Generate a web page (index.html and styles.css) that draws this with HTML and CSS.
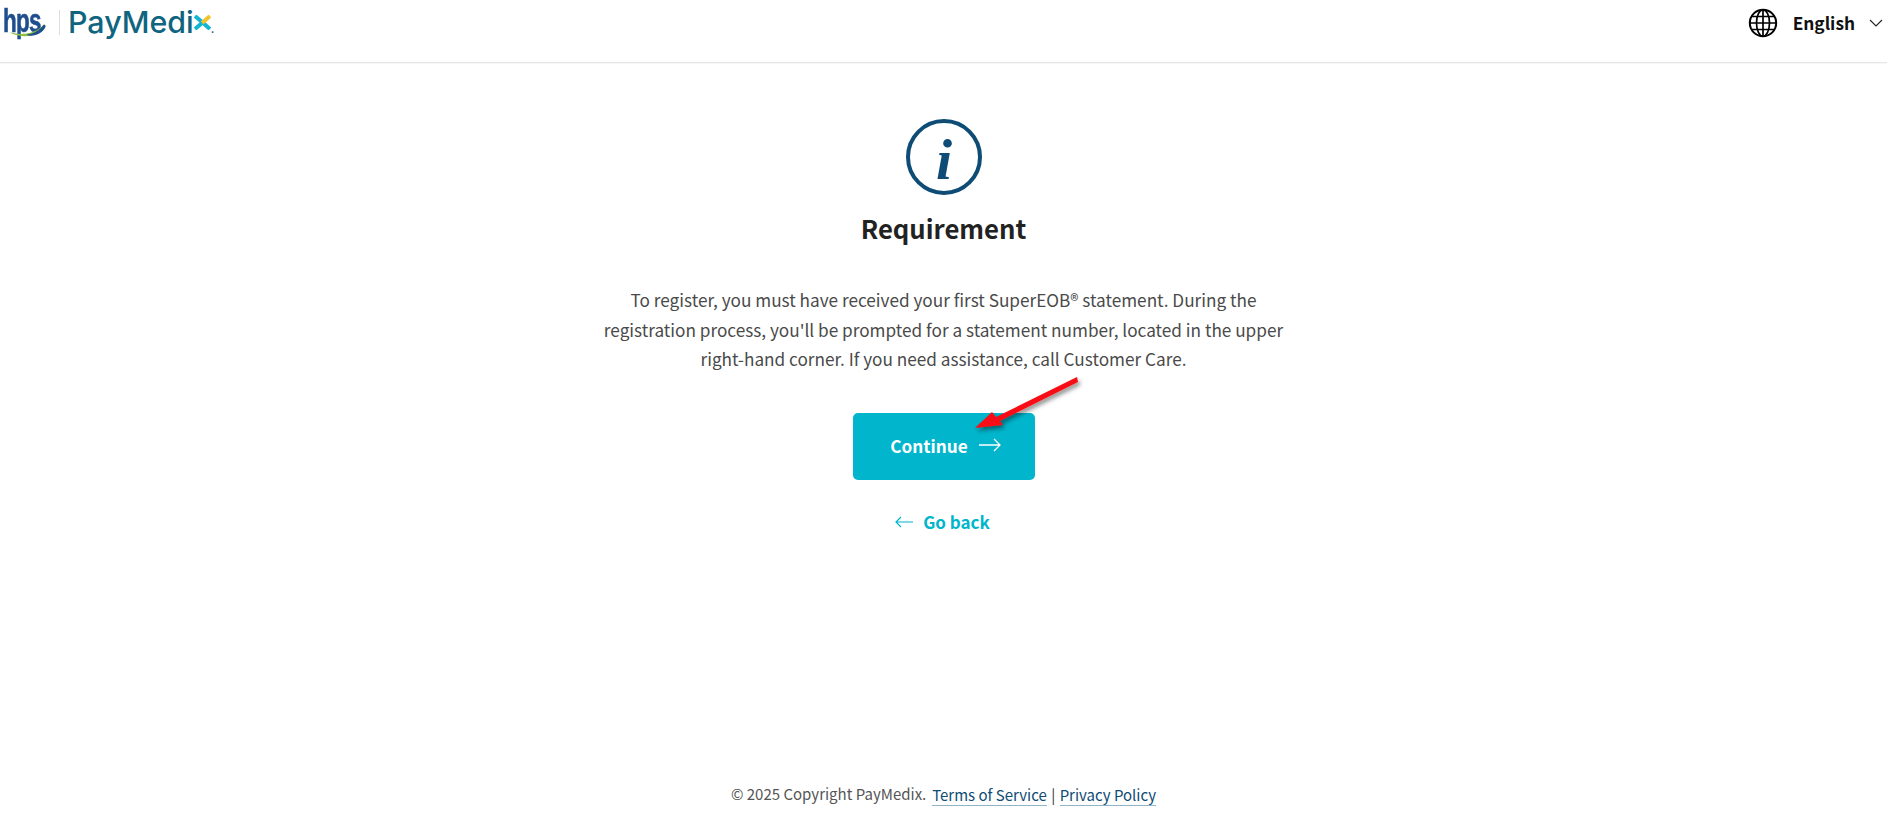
FILE: index.html
```html
<!DOCTYPE html>
<html>
<head>
    <meta charset="utf-8">
    <title>PayMedix - Requirement</title>
    <link rel="stylesheet" href="styles.css">
</head>
<body>
<div class="page">
    <header class="header">
        <div class="logo">
            <span class="logo-hps"><span class="logo-hps-text">hps</span><svg class="logo-swoosh" width="44" height="16" viewBox="0 0 44 16"><path d="M1 9C14 14 32 11 41 1C43 0 44 2 43 4C38 14 14 18 1 9Z" fill="#8fbf3f"/><path d="M22 12C30 11 37 7 41 1C43 0 44 2 43 4C40 10 32 15 22 13Z" fill="#1f4e8f"/></svg></span>
            <span class="logo-divider"></span>
            <span class="logo-pay">PayMedi<span class="logo-x">x<svg class="logo-x-mark" width="17" height="15" viewBox="0 0 17 15"><path d="M1 1L16 14" stroke="#12b5d3" stroke-width="4"/><path d="M16 1L8 8" stroke="#f2c230" stroke-width="4"/><path d="M1 14L8 8" stroke="#12b5d3" stroke-width="4"/></svg></span><span class="logo-dot">.</span></span>
        </div>
        <div class="lang">
            <svg class="globe" width="30" height="30" viewBox="0 0 30 30" fill="none" stroke="#000" stroke-width="1.7">
                <circle cx="15" cy="15" r="13.2" stroke-width="2"/>
                <ellipse cx="15" cy="15" rx="6.5" ry="13.2"/>
                <path d="M15 2V28M2 15H28M3.6 8.5H26.4M3.6 21.5H26.4"/>
            </svg>
            <span class="lang-name">English</span>
            <svg class="chevron" width="14" height="8" viewBox="0 0 14 8" fill="none" stroke="#222" stroke-width="1.1"><path d="M1 1L7 7L13 1"/></svg>
        </div>
    </header>

    <main class="content">
        <svg class="info-icon" width="76" height="76" viewBox="0 0 76 76">
            <circle cx="38" cy="38" r="36" fill="none" stroke="#0e4c75" stroke-width="4"/>
            <text x="38" y="60" class="info-i">i</text>
        </svg>
        <h1 class="title">Requirement</h1>
        <p class="message">To register, you must have received your first SuperEOB® statement. During the registration process, you'll be prompted for a statement number, located in the upper right-hand corner. If you need assistance, call Customer Care.</p>
        <a class="continue-button" href="#">Continue
            <svg width="22" height="14" viewBox="0 0 22 14" fill="none" stroke="#fff" stroke-width="1.3"><path d="M0 7H21M15 1L21 7L15 13"/></svg>
        </a>
        <a class="back-link" href="#">
            <svg width="18" height="12" viewBox="0 0 18 12" fill="none" stroke="#00b5cc" stroke-width="1.2"><path d="M18 6H1M6 1L1 6L6 11"/></svg>
            Go back
        </a>
    </main>

    <footer class="footer">
        <span>© 2025 Copyright PayMedix.</span>
        <span class="footer-links"><a href="#">Terms of Service</a> <span class="footer-sep">|</span> <a href="#">Privacy Policy</a></span>
    </footer>
</div>

<!-- red annotation arrow drawn on top of the screenshot -->
<svg class="annotation" width="120" height="66" viewBox="0 0 120 66">
    <defs>
        <filter id="arrowShadow" x="-20%" y="-20%" width="150%" height="160%">
            <feDropShadow dx="2" dy="3" stdDeviation="2" flood-color="#000" flood-opacity="0.45"/>
        </filter>
    </defs>
    <path d="M104 3L105 8L27 47L30 51L2 54L19 38L23 43Z" fill="#f80d12" filter="url(#arrowShadow)"/>
</svg>
</body>
</html>
```

FILE: styles.css
```css
html, body {
    margin: 0;
    padding: 0;
}
body {
    background: #fff;
    color: #444;
    font-family: "Noto Sans CJK JP", "Noto Sans", sans-serif;
    position: relative;
    overflow: hidden;
}
a {
    text-decoration: none;
}
.page {
    display: flex;
    flex-direction: column;
    height: 813px;
}

/* header */
.header {
    display: flex;
    justify-content: space-between;
    height: 62px;
    border-bottom: 1px solid #e6e6e6;
    box-shadow: 0 1px 1px rgba(0, 0, 0, 0.03);
    flex-shrink: 0;
}
.logo {
    display: flex;
    align-items: flex-start;
    padding: 8px 0 0 3px;
}
.logo-hps {
    position: relative;
    width: 53px;
}
.logo-hps-text {
    display: block;
    font-family: "Liberation Sans", sans-serif;
    font-size: 33px;
    line-height: 26px;
    font-weight: bold;
    letter-spacing: -1px;
    color: #1f4e8f;
    -webkit-text-stroke: 0.6px #1f4e8f;
    transform: scaleX(0.68);
    transform-origin: left;
}
.logo-swoosh {
    position: absolute;
    left: 5px;
    top: 15px;
    width: 38px;
}
.logo-divider {
    width: 1px;
    height: 25px;
    margin: 2px 0 0 3px;
    background: #ddd;
}
.logo-pay {
    margin-left: 8px;
    font-family: "Inter", sans-serif;
    font-size: 30.4px;
    line-height: 28px;
    font-weight: 500;
    color: #0f6480;
}
.logo-x {
    position: relative;
    color: transparent;
}
.logo-x-mark {
    position: absolute;
    left: 0;
    top: 11px;
}
.logo-dot {
    font-size: 12px;
    color: #0f6480;
}
.lang {
    display: flex;
    align-items: flex-start;
    padding: 8px 0 0 0;
    margin-right: 4px;
}
.lang-name {
    margin-left: 15px;
    font-size: 17.3px;
    line-height: 30px;
    font-weight: 700;
    color: #111;
}
.chevron {
    margin: 11px 0 0 14px;
}

/* main block */
.content {
    display: flex;
    flex-direction: column;
    align-items: center;
    padding-top: 56px;
}
.info-icon {
    display: block;
}
.info-i {
    font-family: "Liberation Serif", serif;
    font-style: italic;
    font-weight: bold;
    font-size: 58px;
    text-anchor: middle;
    fill: #0e4c75;
}
.title {
    margin: 13px 0 0;
    font-size: 25.7px;
    line-height: 40px;
    font-weight: 700;
    color: #222;
}
.message {
    width: 700px;
    margin: 37px 0 0;
    font-size: 17.2px;
    line-height: 29.6px;
    text-align: center;
    color: #4a4a4a;
}
.continue-button {
    display: flex;
    align-items: center;
    justify-content: center;
    gap: 11px;
    box-sizing: border-box;
    width: 182px;
    height: 67px;
    margin-top: 39px;
    padding: 0 0 2px 4px;
    border-radius: 5px;
    background: #00b5cc;
    color: #fff;
    font-size: 17.2px;
    font-weight: 700;
}
.back-link {
    display: flex;
    align-items: center;
    gap: 10px;
    margin: 27px 2px 0 0;
    color: #00b5cc;
    font-size: 17px;
    line-height: 30px;
    font-weight: 700;
}

/* footer */
.footer {
    margin-top: auto;
    padding-bottom: 6px;
    display: flex;
    justify-content: center;
    gap: 6px;
    font-size: 15px;
    line-height: 24px;
    color: #555;
}
.footer-links {
    color: #333;
    margin-top: 1px;
}
.footer-links a {
    color: #0e4c75;
    border-bottom: 1px solid #8fb4c8;
}
.footer-sep {
    margin: 0 1px;
}

.annotation {
    position: absolute;
    left: 973px;
    top: 374px;
}
```
